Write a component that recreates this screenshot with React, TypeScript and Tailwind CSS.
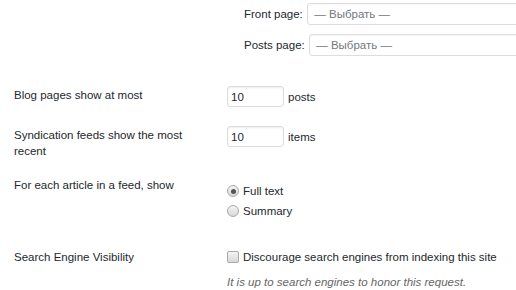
import React from "react";

function Radio({ checked }: { checked?: boolean }) {
  return (
    <span className="relative inline-flex h-[12px] w-[12px] shrink-0 items-center justify-center rounded-full border border-[#a9a9a9] bg-gradient-to-b from-[#f4f4f4] to-[#d8d8d8]">
      {checked && <span className="h-[5px] w-[5px] rounded-full bg-[#555]" />}
    </span>
  );
}

function Checkbox() {
  return (
    <span className="inline-block h-[12px] w-[12px] shrink-0 rounded-[2px] border border-[#a9a9a9] bg-gradient-to-b from-[#f4f4f4] to-[#d8d8d8]" />
  );
}

function Select() {
  return (
    <div className="flex h-[22px] w-[260px] shrink-0 items-center rounded-[3px] border border-[#dddddd] bg-white pl-[6px] text-[#72777c] shadow-[inset_0_1px_2px_rgba(0,0,0,0.04)]">
      — Выбрать —
    </div>
  );
}

function NumInput() {
  return (
    <div className="flex h-[21px] w-[57px] shrink-0 items-center rounded-[3px] border border-[#dddddd] bg-white pl-[3px] text-[#23282d] shadow-[inset_0_1px_2px_rgba(0,0,0,0.07)]">
      10
    </div>
  );
}

export default function App() {
  return (
    <div
      className="h-[290px] w-[516px] overflow-hidden bg-white pt-[3px] text-[11.5px] leading-[16px] text-[#23282d]"
      style={{ fontFamily: '"Liberation Sans", Arial, sans-serif' }}
    >
      {/* Front / posts page */}
      <div className="grid grid-cols-[227px_1fr]">
        <div />
        <div className="flex flex-col gap-[9px] overflow-hidden pl-[17px]">
          <div className="flex h-[22px] items-center gap-[4.5px] whitespace-nowrap">
            <span>Front page:</span>
            <Select />
          </div>
          <div className="flex h-[22px] items-center gap-[4.5px] whitespace-nowrap">
            <span>Posts page:</span>
            <Select />
          </div>
        </div>
      </div>

      {/* Blog pages */}
      <div className="mt-[30px] grid grid-cols-[227px_1fr]">
        <div className="mt-[1px] pl-[14px]">Blog pages show at most</div>
        <div className="flex items-center gap-[4px]">
          <NumInput />
          <span>posts</span>
        </div>
      </div>

      {/* Syndication */}
      <div className="mt-[19px] grid grid-cols-[227px_1fr]">
        <div className="mt-[1px] w-[200px] pl-[14px]">Syndication feeds show the most recent</div>
        <div className="flex h-[21px] items-center gap-[4px]">
          <NumInput />
          <span>items</span>
        </div>
      </div>

      {/* Feed article */}
      <div className="mt-[18px] grid grid-cols-[227px_1fr]">
        <div className="pl-[14px]">For each article in a feed, show</div>
        <div className="flex flex-col pt-[4px]">
          <label className="flex h-[20px] items-center gap-[4px]">
            <Radio checked />
            <span>Full text</span>
          </label>
          <label className="flex h-[20px] items-center gap-[4px]">
            <Radio />
            <span>Summary</span>
          </label>
        </div>
      </div>

      {/* Search engine */}
      <div className="mt-[28px] grid grid-cols-[227px_1fr]">
        <div className="pl-[14px]">Search Engine Visibility</div>
        <div className="flex flex-col">
          <label className="flex h-[16px] items-center gap-[4px] whitespace-nowrap">
            <Checkbox />
            <span>Discourage search engines from indexing this site</span>
          </label>
          <p className="mt-[9px] whitespace-nowrap italic text-[#666]">
            It is up to search engines to honor this request.
          </p>
        </div>
      </div>
    </div>
  );
}
